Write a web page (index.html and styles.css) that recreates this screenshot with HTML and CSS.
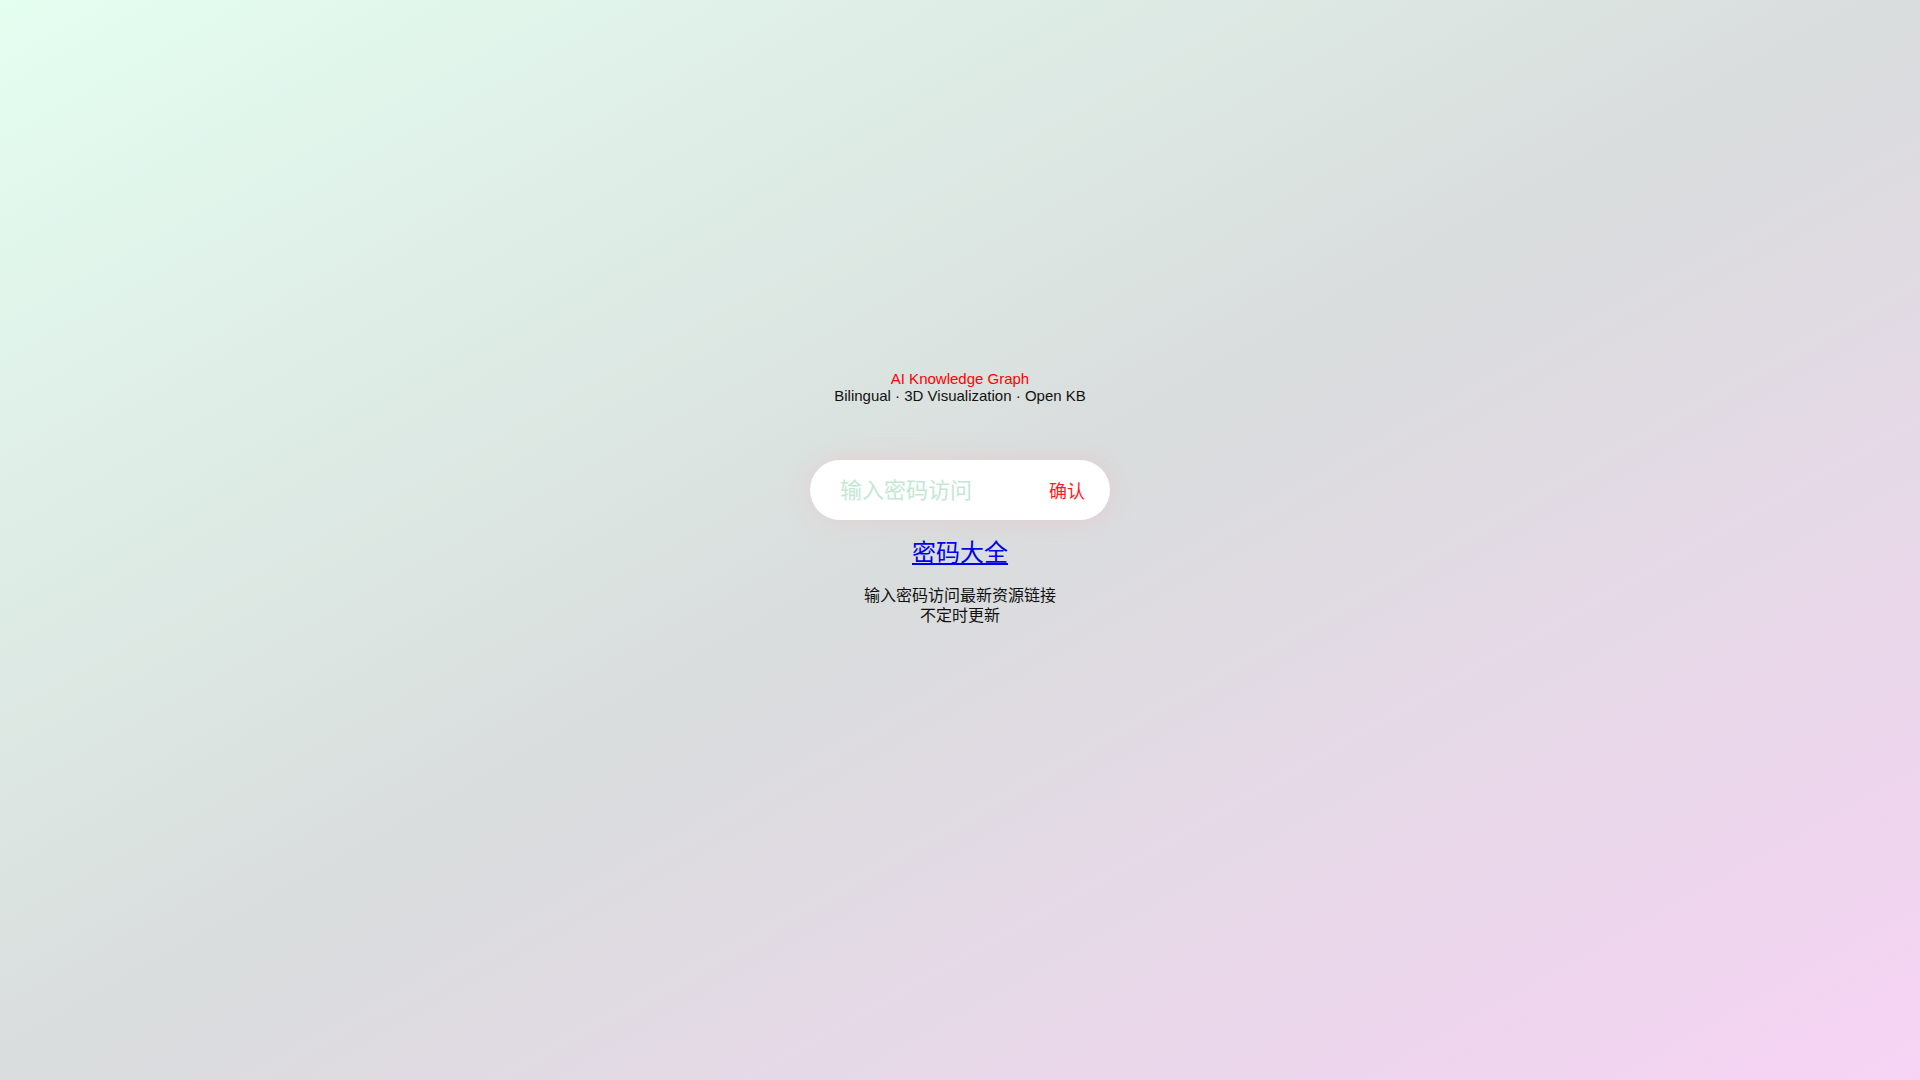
FILE: index.html
```html
<!DOCTYPE html>
<html lang="zh-CN">
<head>
<meta charset="utf-8">
<title>AI Knowledge Graph</title>
<link rel="stylesheet" href="styles.css">
</head>
<body>
<main class="page">
  <header class="brand">
    <div class="brand-title">AI Knowledge Graph</div>
    <div class="brand-sub">Bilingual · 3D Visualization · Open KB</div>
  </header>
  <form class="pill" onsubmit="return false;">
    <input class="pill-input" type="password" placeholder="输入密码访问">
    <button class="pill-btn" type="submit">确认</button>
  </form>
  <a class="link" href="#">密码大全</a>
  <p class="info">输入密码访问最新资源链接<br>不定时更新</p>
</main>
</body>
</html>
```

FILE: styles.css
```css
html, body {
  margin: 0;
  padding: 0;
  height: 100%;
}
body {
  background: linear-gradient(to bottom right, #e4fef0 0%, #d9dddd 50%, #f6d3f4 100%);
  font-family: "Liberation Sans", Arial, "Noto Sans CJK SC", sans-serif;
  color: #111;
}
.page {
  display: flex;
  flex-direction: column;
  align-items: center;
  padding-top: 370px;
}
.brand {
  text-align: center;
  font-size: 15px;
  line-height: normal;
}
.brand-title {
  color: #ff0000;
}
.brand-sub {
  color: #111;
}
.pill {
  margin-top: 56px;
  width: 300px;
  height: 60px;
  box-sizing: border-box;
  background: #fff;
  border-radius: 30px;
  box-shadow: 0 0 26px rgba(255, 160, 180, 0.28);
  display: flex;
  align-items: center;
  gap: 8px;
  padding: 0 25px 0 30px;
}
.pill-input {
  flex: 1;
  min-width: 0;
  height: 36px;
  box-sizing: border-box;
  border: none;
  outline: none;
  background: transparent;
  font-family: "Noto Sans CJK SC", sans-serif;
  font-size: 22px;
  line-height: 30px;
  padding: 0 0 5px;
  color: #333;
}
.pill-input::placeholder {
  color: #c2e8d3;
}
.pill-btn {
  border: none;
  background: transparent;
  color: #ff1a1a;
  font-family: "Noto Sans CJK SC", sans-serif;
  font-size: 18px;
  padding: 0;
  cursor: pointer;
}
.link {
  margin-top: 14px;
  font-family: "Noto Sans CJK SC", sans-serif;
  font-size: 24px;
  line-height: 1.45;
  color: #0000ee;
  text-decoration: underline;
}
.info {
  margin: 15px 0 0;
  font-family: "Noto Sans CJK SC", sans-serif;
  font-size: 16px;
  line-height: 20px;
  text-align: center;
  color: #111;
}
```
